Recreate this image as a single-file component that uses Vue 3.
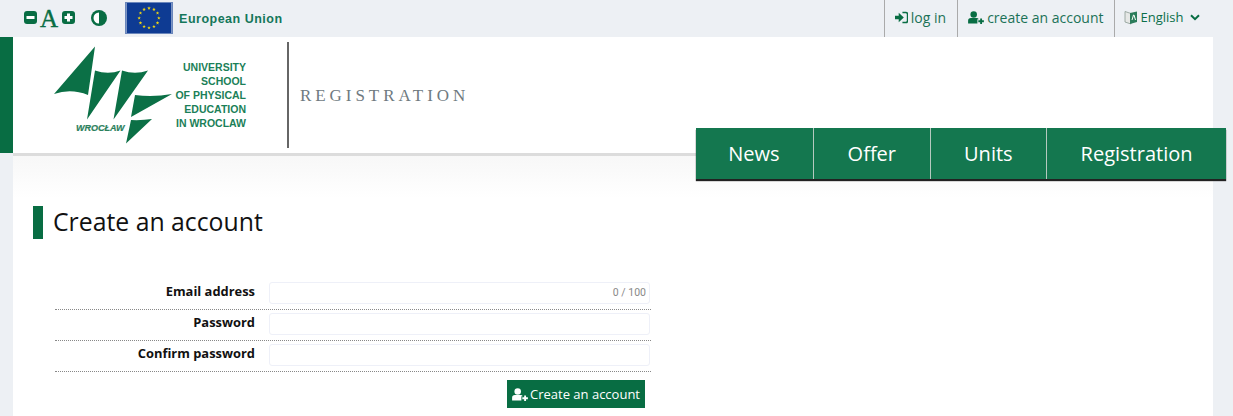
<template>
  <div class="page">
    <div class="topbar">
      <div class="tools">
        <svg class="ico-sq" viewBox="0 0 13 13"><rect width="13" height="13" rx="3" fill="#086d43"/><rect x="2.5" y="5" width="8" height="3" fill="#fff"/></svg>
        <span class="big-a">A</span>
        <svg class="ico-sq" viewBox="0 0 13 13"><rect width="13" height="13" rx="3" fill="#086d43"/><path d="M2.5 5H5V2.500H8V5H10.500V8H8V10.500H5V8H2.500Z" fill="#fff"/></svg>
        <svg class="ico-contrast" viewBox="0 0 16 16"><circle cx="8" cy="8" r="8" fill="#086d43"/><path d="M8 2.500A5.500 5.500 0 0 0 8 13.500Z" fill="#fff"/></svg>
        <svg class="flag" viewBox="0 0 48 32">
          <rect width="48" height="32" fill="#0e3b93"/>
          <polygon v-for="s in stars" :key="s.x" :points="s.points" fill="#f5d90f"/>
        </svg>
        <span class="eu">European Union</span>
      </div>
      <div class="links">
        <a class="link">
          <svg class="ico" viewBox="0 0 14 14"><path d="M0 5H4V2L9.500 7L4 12V9H0Z" fill="#086d43"/><path d="M8 1.500H11.500Q13.500 1.500 13.500 3.500V10.500Q13.500 12.500 11.500 12.500H8" fill="none" stroke="#086d43" stroke-width="1.600"/></svg>
          log in
        </a>
        <a class="link">
          <svg class="ico wide" viewBox="0 0 17 14"><circle cx="6" cy="3.800" r="3.500" fill="#086d43"/><path d="M0 13.500V10.500Q0 7.500 3 7.500H9Q11 7.500 11.500 9H10V13.500Z" fill="#086d43"/><path d="M11 10H13V8H15V10H17V12H15V14H13V12H11Z" fill="#086d43"/></svg>
          create an account
        </a>
        <a class="link lang">
          <svg class="ico flagicon" viewBox="0 0 14 15"><path d="M1 1.500L7 3.500V14L1 12Z" fill="#e6e8e6" stroke="#8a9a92" stroke-width="0.800"/><path d="M6 3L13 1.500V12L6 14Z" fill="#2b7d5b"/><path d="M8 10L9.500 5H10L11.500 10" fill="none" stroke="#fff" stroke-width="1"/></svg>
          <span>English</span>
          <svg class="chev" viewBox="0 0 10 7"><path d="M1 1.200L5 5.200L9 1.200" fill="none" stroke="#086d43" stroke-width="2"/></svg>
        </a>
      </div>
    </div>

    <header class="header">
      <div class="logo">
        <svg class="mark" viewBox="0 0 140 110">
          <g fill="#0b7046">
            <path d="M55 6.500L14 54Q31 48 48 55Z"/>
            <path d="M55 30.500Q68 35 80.500 30.500L47 79.500Z"/>
            <path d="M82 30.500Q95 35 108 30.500L73.500 79.500Z"/>
            <path d="M95 55Q113 57.500 132 54L91 77Z"/>
            <path d="M91 80Q102 80.500 112 79L86 103.500Z"/>
          </g>
          <text x="36" y="91" class="wroclaw">WROCŁAW</text>
        </svg>
        <div class="uni">UNIVERSITY<br>SCHOOL<br>OF PHYSICAL<br>EDUCATION<br>IN WROCLAW</div>
      </div>
      <div class="divider"></div>
      <div class="title">REGISTRATION</div>

      <nav class="nav">
        <a v-for="item in navItems" :key="item">{{ item }}</a>
      </nav>
    </header>

    <main class="main">
      <h1>Create an account</h1>
      <form class="form" @submit.prevent>
        <div v-for="f in fields" :key="f.label" class="row">
          <label>{{ f.label }}</label>
          <div class="field">
            <input :type="f.type" />
            <span v-if="f.counter" class="counter">{{ f.counter }}</span>
          </div>
        </div>
        <div class="actions">
          <button type="submit">
            <svg class="ico wide" viewBox="0 0 17 14"><circle cx="6" cy="3.800" r="3.500" fill="#fff"/><path d="M0 13.500V10.500Q0 7.500 3 7.500H9Q11 7.500 11.500 9H10V13.500Z" fill="#fff"/><path d="M11 10H13V8H15V10H17V12H15V14H13V12H11Z" fill="#fff"/></svg>
            Create an account
          </button>
        </div>
      </form>
    </main>
  </div>
</template>

<script setup>
const navItems = ["News", "Offer", "Units", "Registration"]

const fields = [
  { label: "Email address", type: "text", counter: "0 / 100" },
  { label: "Password", type: "password" },
  { label: "Confirm password", type: "password" },
]

// twelve stars round the flag centre
const stars = Array.from({ length: 12 }, (_, i) => {
  const a = (i * Math.PI) / 6
  const cx = 24 + 10.5 * Math.sin(a)
  const cy = 16 - 10.5 * Math.cos(a)
  const pts = []
  for (let k = 0; k < 10; k++) {
    const r = k % 2 ? 0.8 : 2
    const b = (k * Math.PI) / 5
    pts.push(`${(cx + r * Math.sin(b)).toFixed(2)},${(cy - r * Math.cos(b)).toFixed(2)}`)
  }
  return { x: i, points: pts.join(" ") }
})
</script>

<style>
html, body {
  margin: 0;
  background: #edf0f4;
  overflow: hidden;
}
</style>

<style scoped>
.page {
  height: 416px;
  overflow: hidden;
  font-family: "Open Sans", sans-serif;
  background: #edf0f4;
}

.topbar {
  height: 37px;
  width: 1200px;
  margin-left: 13px;
  display: flex;
  justify-content: space-between;
}

.tools {
  display: flex;
  align-items: center;
  padding: 0 0 2px 11px;
  box-sizing: border-box;
}

.ico-sq {
  width: 13px;
  height: 13px;
}

.big-a {
  font-family: "Liberation Serif", serif;
  font-size: 25px;
  font-weight: 400;
  line-height: 1;
  color: #086d43;
  margin: 2px 4px 0 3px;
  -webkit-text-stroke: 0.4px #086d43;
}

.ico-contrast {
  width: 16px;
  height: 16px;
  margin-left: 16px;
}

.flag {
  width: 48px;
  height: 32px;
  margin-left: 18px;
  box-sizing: border-box;
  border: 1px solid #6a86bb;
}

.eu {
  font-family: "Liberation Sans", sans-serif;
  font-size: 12.500px;
  font-weight: 700;
  letter-spacing: 0.5px;
  color: #14775a;
  margin: 2px 0 0 6px;
}

.links {
  display: flex;
}

.link {
  display: flex;
  align-items: center;
  gap: 3px;
  padding: 0 10px 3px;
  border-left: 1px solid #aaa;
  font-size: 14px;
  color: #1b7257;
}

.link:first-child {
  padding-right: 11px;
}

.link.lang {
  padding: 0 13.500px 3px 9px;
  font-size: 13px;
  font-weight: 500;
  color: #0b6f4a;
}

.ico {
  width: 13px;
  height: 13px;
}

.ico.wide {
  width: 16px;
  height: 13px;
}

.flagicon {
  width: 14px;
  height: 15px;
}

.chev {
  width: 10px;
  height: 7px;
  margin-left: 3px;
}

.header {
  position: relative;
  height: 116px;
  margin-right: 20px;
  display: flex;
  background: #fff;
  border-left: 13px solid #086d43;
  z-index: 1;
}

.header::after {
  content: "";
  position: absolute;
  left: 0;
  right: 0;
  bottom: -3px;
  height: 3px;
  background: #dcdcdc;
}

.logo {
  display: flex;
  box-sizing: border-box;
  width: 266px;
  padding-left: 27px;
  position: relative;
}

.mark {
  width: 140px;
  height: 110px;
  margin-top: 3px;
  flex: none;
}

.wroclaw {
  font-family: "Liberation Sans", sans-serif;
  font-size: 9px;
  font-weight: 700;
  font-style: italic;
  fill: #2c805c;
  stroke: #2c805c;
  stroke-width: 0.2px;
}

.uni {
  font-family: "Liberation Sans", sans-serif;
  font-size: 10.500px;
  font-weight: 700;
  line-height: 13.900px;
  color: #1b7f58;
  text-align: right;
  position: absolute;
  right: 33px;
  top: 24px;
}

.divider {
  width: 2px;
  height: 106px;
  margin: 5px 0 0 8px;
  background: #666;
}

.title {
  font-family: "Liberation Serif", serif;
  font-size: 17px;
  letter-spacing: 3.950px;
  color: #6f7a7f;
  margin: 49px 0 0 11px;
}

.nav {
  position: absolute;
  right: -13px;
  top: 91px;
  height: 51px;
  display: flex;
  background: #14774f;
  box-shadow: 0 2px 1px #222;
  z-index: 2;
}

.nav a {
  display: flex;
  align-items: center;
  padding: 0 33.500px 1px;
  font-size: 20px;
  font-weight: 500;
  color: #fff;
  border-left: 1px solid #b5c9bf;
}

.nav a:first-child {
  border-left: none;
  padding-left: 32px;
}

.main {
  margin: 0 20px 0 13px;
  height: 263px;
  background: linear-gradient(#f7f7f7 0, #fff 45px);
  padding: 53px 20px 0;
}

h1 {
  margin: 0;
  height: 33px;
  line-height: 31px;
  padding-left: 10px;
  border-left: 10px solid #086d43;
  font-size: 24.800px;
  font-weight: 400;
  color: #111;
}

.form {
  width: 596px;
  margin: 40px 0 0 22px;
}

.row {
  display: flex;
  height: 27px;
  padding-top: 3px;
  border-bottom: 1px dotted #888;
}

label {
  width: 200px;
  text-align: right;
  font-size: 12.900px;
  font-weight: 700;
  color: #111;
  line-height: 18px;
}

.field {
  position: relative;
  margin-left: 14px;
  width: 381px;
}

input {
  width: 100%;
  height: 22px;
  box-sizing: border-box;
  border: 1px solid #eef0f8;
  border-radius: 3px;
  background: #fff;
  outline: none;
  display: block;
}

.counter {
  position: absolute;
  right: 4px;
  top: 4px;
  font-family: Roboto, sans-serif;
  font-size: 10.500px;
  color: #888;
}

.actions {
  display: flex;
  justify-content: flex-end;
  padding: 8px 6px 0 0;
}

button {
  display: flex;
  align-items: center;
  gap: 2px;
  height: 28px;
  width: 138px;
  padding: 0 0 0 5px;
  border: none;
  background: #086d43;
  color: #fff;
  font-family: "Open Sans", sans-serif;
  font-size: 13px;
}
</style>
